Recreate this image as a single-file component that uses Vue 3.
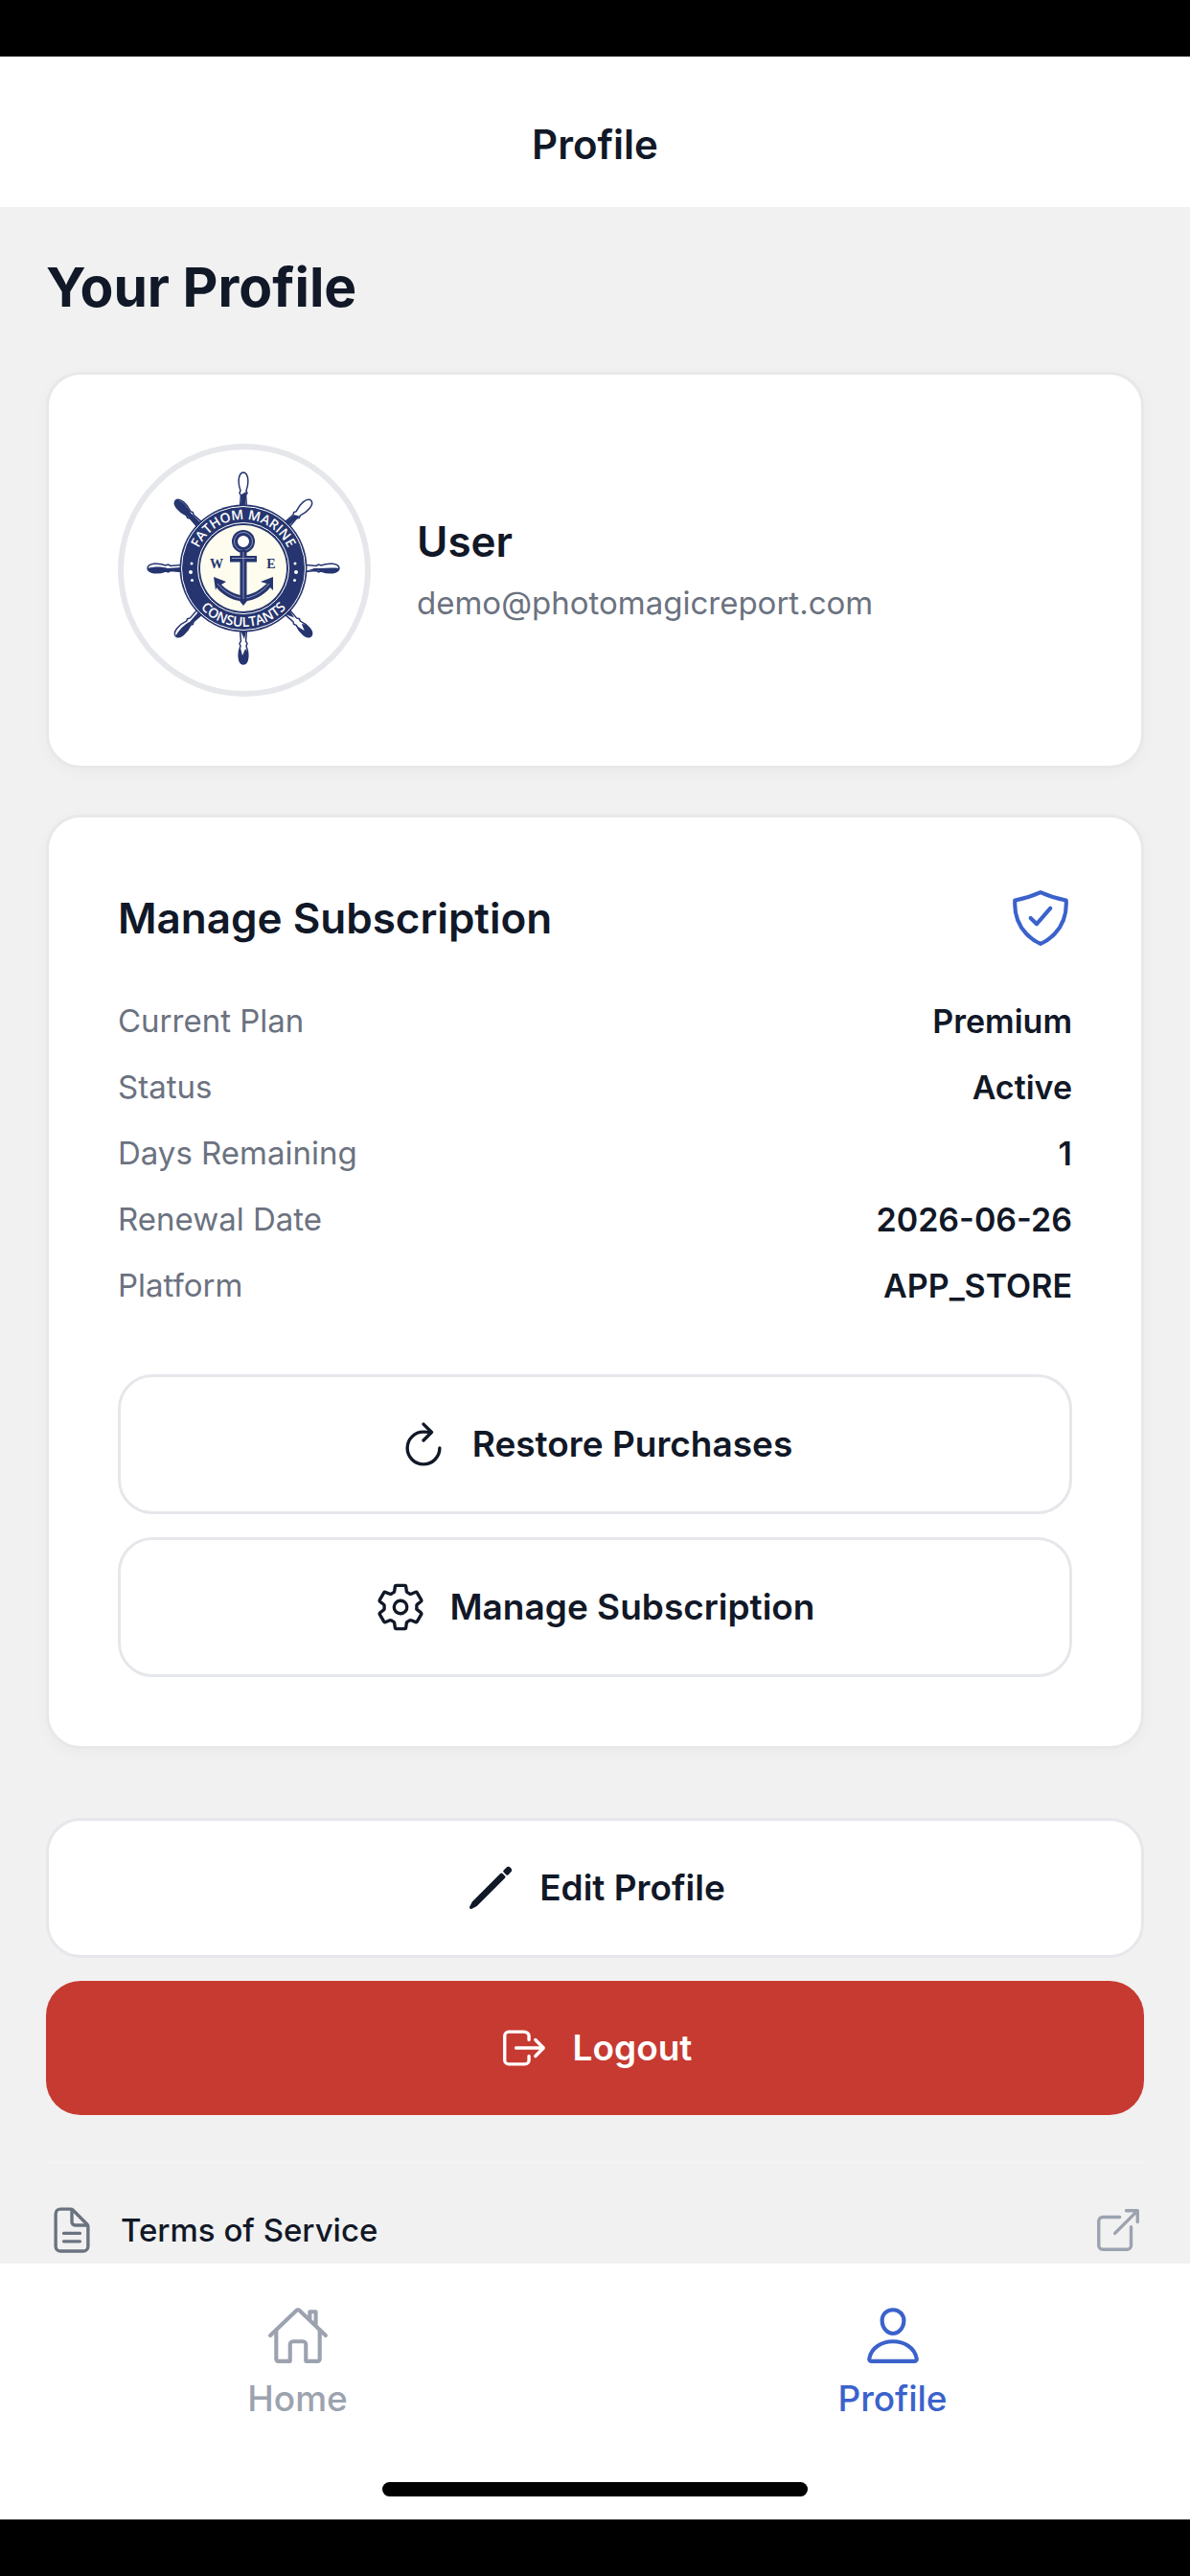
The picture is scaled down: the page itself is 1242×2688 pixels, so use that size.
<template>
  <div class="shell">
    <header class="topbar">
      <span class="topbar-title">Profile</span>
    </header>

    <main class="content">
      <h1>Your Profile</h1>

      <section class="card user-card">
        <div class="avatar">
          <svg viewBox="-125 -124 252 252" role="img" aria-label="Fathom Marine Consultants">
            <defs>
              <path id="arc-top" d="M-51 0A51 51 0 0 1 51 0" />
              <path id="arc-bottom" d="M-61 0A61 61 0 0 0 61 0" />
            </defs>
            <!-- wheel handles -->
            <g v-for="handle in handles" :key="handle.angle" :transform="`rotate(${handle.angle})`">
              <path
                class="handle"
                d="M-3.4-65L-2.6-76-4-78.500-3-81C-6-89-5.500-99.500 0-100 5.500-99.500 6-89 3-81L4-78.500 2.600-76 3.400-65Z"
              />
              <path class="navy" :d="handle.shade" />
            </g>
            <circle class="navy" r="66.500" />
            <circle class="rim" r="64.500" />
            <circle class="rim" r="47.500" />
            <circle class="cream" r="45" />
            <text class="ring-text">
              <textPath href="#arc-top" startOffset="50%">FATHOM MARINE</textPath>
            </text>
            <text class="ring-text">
              <textPath href="#arc-bottom" startOffset="50%">CONSULTANTS</textPath>
            </text>
            <g class="dots">
              <circle cx="-54" cy="-5" r="1.500" /><circle cx="-55" cy="4" r="2" /><circle cx="-53.500" cy="12.500" r="1.500" />
              <circle cx="54" cy="-5" r="1.500" /><circle cx="55" cy="4" r="2" /><circle cx="53.500" cy="12.500" r="1.500" />
            </g>
            <!-- anchor -->
            <circle class="anchor-ring" cy="-28" r="9" />
            <circle class="anchor-line" cy="-28" r="9.500" />
            <path class="navy" d="M-3.500-19h7v6h10.500v6.500H3.500V28C13 26 20 20 24.500 16L18 14 31 9 31 23 28 20C21 29 11 33 4 34L0 39-4 34C-11 33-21 29-28 20L-29 23-31 9-18 14-23 17C-19 21-12 26-3.500 28V-6.500H-14V-13h10.500Z" />
            <path class="anchor-line" d="M0-17V32M-12-10.500H12M-27 16C-20 25-10 30-3 31M27 16C20 25 10 30 3 31" />
            <text class="compass" x="-28" y="0">W</text>
            <text class="compass" x="29" y="0">E</text>
          </svg>
        </div>
        <div>
          <h2>User</h2>
          <p class="email">demo@photomagicreport.com</p>
        </div>
      </section>

      <section class="card">
        <div class="card-head">
          <h2>Manage Subscription</h2>
          <svg class="icon icon-lg" viewBox="0 0 512 512" aria-hidden="true">
            <path d="M336 176L225.200 304 176 255.800" />
            <path d="M463.100 112.370C373.680 96.330 336.710 84.450 256 48c-80.710 36.450-117.680 48.330-207.100 64.370C32.700 369.130 240.580 457.790 256 464c15.420-6.210 223.300-94.870 207.100-351.630z" />
          </svg>
        </div>

        <dl class="details">
          <div v-for="item in details" :key="item.label" class="detail">
            <dt>{{ item.label }}</dt>
            <dd>{{ item.value }}</dd>
          </div>
        </dl>

        <div class="actions">
          <button type="button" class="btn">
            <svg class="icon" viewBox="0 0 512 512" aria-hidden="true">
              <path d="M320 146s24.360-12-64-12a160 160 0 10160 160" />
              <path d="M256 58l80 80-80 80" />
            </svg>
            Restore Purchases
          </button>
          <button type="button" class="btn">
            <svg class="icon" viewBox="0 0 512 512" aria-hidden="true">
              <path d="M262.290 192.310a64 64 0 1057.400 57.400 64.130 64.130 0 00-57.400-57.400zM416.390 256a154.340 154.340 0 01-1.530 20.790l45.210 35.460a10.810 10.810 0 012.450 13.750l-42.770 74a10.810 10.810 0 01-13.140 4.590l-44.900-18.080a16.110 16.110 0 00-15.170 1.750A164.480 164.480 0 01325 400.800a15.940 15.940 0 00-8.820 12.140l-6.730 47.890a11.080 11.080 0 01-10.680 9.170h-85.540a11.110 11.110 0 01-10.690-8.870l-6.720-47.820a16.070 16.070 0 00-9-12.220 155.300 155.300 0 01-21.460-12.570 16 16 0 00-15.110-1.710l-44.890 18.070a10.810 10.810 0 01-13.140-4.580l-42.770-74a10.800 10.800 0 012.450-13.750l38.210-30a16.050 16.050 0 006-14.080c-.36-4.170-.58-8.330-.58-12.500s.21-8.270.58-12.350a16 16 0 00-6.070-13.940l-38.190-30A10.810 10.810 0 0149.480 186l42.770-74a10.810 10.810 0 0113.140-4.590l44.900 18.080a16.110 16.110 0 0015.170-1.750A164.480 164.480 0 01187 111.200a15.940 15.940 0 008.820-12.140l6.730-47.890A11.080 11.080 0 01213.230 42h85.540a11.110 11.110 0 0110.690 8.870l6.720 47.820a16.070 16.070 0 009 12.220 155.300 155.300 0 0121.460 12.570 16 16 0 0015.110 1.710l44.890-18.070a10.810 10.810 0 0113.140 4.580l42.770 74a10.800 10.800 0 01-2.450 13.750l-38.210 30a16.050 16.050 0 00-6.050 14.080c.33 4.140.55 8.300.55 12.470z" />
            </svg>
            Manage Subscription
          </button>
        </div>
      </section>

      <div class="actions account-actions">
        <button type="button" class="btn">
          <svg class="icon" viewBox="0 0 512 512" aria-hidden="true">
            <path d="M364.130 125.250L87 403l-23 45 44.990-23 277.760-277.130-22.620-22.620zM420.690 68.690l-22.620 22.620 22.620 22.630 22.620-22.630a16 16 0 000-22.620h0a16 16 0 00-22.620 0z" />
          </svg>
          Edit Profile
        </button>
        <button type="button" class="btn btn-danger">
          <svg class="icon" viewBox="0 0 512 512" aria-hidden="true">
            <path d="M304 336v40a40 40 0 01-40 40H104a40 40 0 01-40-40V136a40 40 0 0140-40h152c22.090 0 48 17.910 48 40v40M368 336l80-80-80-80M176 256h256" />
          </svg>
          Logout
        </button>
      </div>

      <div class="links">
        <a href="#terms" class="link-row">
          <svg class="icon icon-doc" viewBox="0 0 512 512" aria-hidden="true">
            <path d="M416 221.250V416a48 48 0 01-48 48H144a48 48 0 01-48-48V96a48 48 0 0148-48h98.750a32 32 0 0122.620 9.370l141.260 141.260a32 32 0 019.370 22.620z" />
            <path d="M256 56v120a32 32 0 0032 32h120M176 288h160M176 368h160" />
          </svg>
          <span class="link-label">Terms of Service</span>
          <svg class="icon icon-open" viewBox="0 0 512 512" aria-hidden="true">
            <path d="M384 224v184a40 40 0 01-40 40H104a40 40 0 01-40-40V168a40 40 0 0140-40h167.480M336 64h112v112M224 288L440 72" />
          </svg>
        </a>
      </div>
    </main>

    <nav class="tabbar">
      <div class="tabs">
        <a href="#home" class="tab">
          <svg class="icon icon-lg" viewBox="0 0 512 512" aria-hidden="true">
            <path d="M80 212v236a16 16 0 0016 16h96V328a24 24 0 0124-24h80a24 24 0 0124 24v136h96a16 16 0 0016-16V212" />
            <path d="M480 256L266.890 52c-5-5.280-16.690-5.340-21.780 0L32 256M400 179V64h-48v69" />
          </svg>
          Home
        </a>
        <a href="#profile" class="tab active" aria-current="page">
          <svg class="icon icon-lg" viewBox="0 0 512 512" aria-hidden="true">
            <path d="M344 144c-3.920 52.870-44 96-88 96s-84.150-43.120-88-96c-4-55 35-96 88-96s92 42 88 96z" />
            <path d="M256 304c-87 0-175.300 48-191.640 138.600C62.390 453.520 68.570 464 80 464h352c11.440 0 17.620-10.480 15.650-21.400C431.300 352 343 304 256 304z" />
          </svg>
          Profile
        </a>
      </div>
      <div class="home-indicator"></div>
    </nav>
  </div>
</template>

<script setup>
const details = [
  { label: 'Current Plan', value: 'Premium' },
  { label: 'Status', value: 'Active' },
  { label: 'Days Remaining', value: '1' },
  { label: 'Renewal Date', value: '2026-06-26' },
  { label: 'Platform', value: 'APP_STORE' }
];

// Dark side of each handle, drawn pointing up and rotated into place
const shades = {
  base: 'M-3-65L-2-77 3-80 2-65Z',
  left: 'M-3-65L-3-80C-6-90-5-99 0-100 2-92 2-86 0-79L1-65Z',
  right: 'M3-65L2-74 3-80C6-90 5-99 0-100-1-92 0-86 0-79L0-74Z',
  tip: 'M-3-65L-1-74 3-65ZM-5-88C-5-97-3-100 0-100 3-100 5-97 5-88L3-83 1-91-2-84Z',
  full: 'M-3-65L-3-80C-6-90-5-99 0-100 5-99 5-88 2-80L2-65Z'
};

const handles = [
  { angle: 0, shade: shades.base },
  { angle: 45, shade: shades.base },
  { angle: 90, shade: shades.right },
  { angle: 135, shade: shades.tip },
  { angle: 180, shade: shades.tip },
  { angle: 225, shade: shades.left },
  { angle: 270, shade: shades.left },
  { angle: 315, shade: shades.full }
];
</script>

<style>
body { background: #000000; }
</style>

<style scoped>
.shell {
  box-sizing: border-box;
  height: 100vh;
  padding: 59px 0;
  display: flex;
  flex-direction: column;
  background: #000000;
  color: #111827;
  font-family: Inter, 'Liberation Sans', sans-serif;
}
h1, h2, p, dl, dd { margin: 0; }

.topbar {
  flex: none;
  padding: 67px 48px 40px;
  background: #ffffff;
  text-align: center;
}
.topbar-title { display: block; font-size: 42px; line-height: 50px; font-weight: 600; }

.content {
  flex: 1;
  min-height: 0;
  overflow-y: auto;
  scrollbar-width: none;
  padding: 48px 48px 0;
  background: #f1f1f1;
}
h1 { margin-bottom: 52px; font-size: 57px; line-height: 72px; font-weight: 700; }
h2 { font-size: 44px; line-height: 54px; font-weight: 600; }

.card {
  margin-bottom: 48px;
  padding: 72px;
  background: #ffffff;
  border: 3px solid #e7e8e9;
  border-radius: 36px;
  box-shadow: 0 4px 16px rgba(0, 0, 0, 0.03);
}
.user-card { display: flex; align-items: center; gap: 48px; }
.avatar {
  flex: none;
  box-sizing: border-box;
  width: 264px;
  height: 264px;
  border: 6px solid #e5e7eb;
  border-radius: 50%;
  overflow: hidden;
}
.avatar svg { display: block; width: 100%; height: 100%; }
.email { margin-top: 15px; color: #6b7280; font-size: 33px; line-height: 45px; }

.navy { fill: #26356f; }
.cream { fill: #fdfcee; }
.handle { fill: #ffffff; stroke: #26356f; stroke-width: 1.5; }
.rim { fill: none; stroke: #ffffff; stroke-width: 1; }
.ring-text {
  fill: #ffffff;
  font-family: 'Open Sans', sans-serif;
  font-size: 14px;
  font-weight: 600;
  text-anchor: middle;
}
.dots { fill: #ffffff; }
.anchor-ring { fill: #ffffff; stroke: #26356f; stroke-width: 6; }
.anchor-line { fill: none; stroke: #8d97bb; stroke-width: 1; }
.compass {
  fill: #26356f;
  font-family: 'Liberation Serif', serif;
  font-size: 14px;
  font-weight: 700;
  text-anchor: middle;
}

.card-head { display: flex; align-items: center; justify-content: space-between; margin-bottom: 52px; }
.card-head .icon { color: #3b62cb; }
.icon {
  flex: none;
  width: 54px;
  height: 54px;
  fill: none;
  stroke: currentColor;
  stroke-width: 32;
  stroke-linecap: round;
  stroke-linejoin: round;
}
.icon-lg { width: 66px; height: 66px; }

.details { display: flex; flex-direction: column; gap: 24px; margin-bottom: 70px; font-size: 33px; line-height: 45px; }
.detail { display: flex; justify-content: space-between; }
dt { color: #6b7280; }
dd { font-size: 34px; font-weight: 600; }

.actions { display: flex; flex-direction: column; gap: 24px; }
.btn {
  display: flex;
  align-items: center;
  justify-content: center;
  gap: 24px;
  width: 100%;
  padding: 43px 48px;
  background: #ffffff;
  color: #111827;
  border: 3px solid #e5e7eb;
  border-radius: 36px;
  font-family: inherit;
  font-size: 37px;
  line-height: 54px;
  font-weight: 600;
  cursor: pointer;
}
.account-actions { margin-top: 72px; }
.btn-danger { border: none; background: #c73a31; color: #ffffff; }

.links { margin-top: 48px; border-top: 3px solid #f1f3f5; }
.link-row {
  display: flex;
  align-items: center;
  gap: 24px;
  padding: 42px 0;
  color: #111827;
  text-decoration: none;
}
.link-label { flex: 1; font-size: 33px; line-height: 45px; font-weight: 500; }
.icon-doc { color: #6b7280; }
.icon-open { color: #9ca3af; }

.tabbar { flex: none; background: #ffffff; }
.tabs { display: flex; padding: 42px 0 65px; }
.tab {
  flex: 1;
  display: flex;
  flex-direction: column;
  align-items: center;
  gap: 10px;
  color: #9ca3af;
  font-size: 37px;
  line-height: 45px;
  font-weight: 500;
  text-decoration: none;
}
.tab.active { color: #3b62cb; }
.home-indicator {
  width: 444px;
  height: 15px;
  margin: 0 auto 24px;
  border-radius: 8px;
  background: #000000;
}
</style>
